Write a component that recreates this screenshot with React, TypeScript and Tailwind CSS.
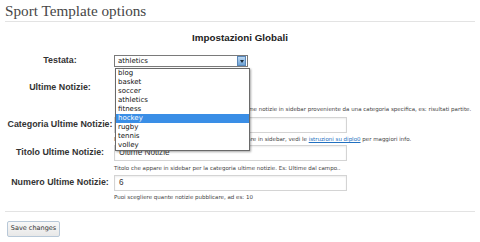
import React from "react";

const items = ["blog", "basket", "soccer", "athletics", "fitness", "hockey", "rugby", "tennis", "volley"];

function Label({ children, h }: { children: React.ReactNode; h: string }) {
  return (
    <div className={`w-[110px] shrink-0 ${h} flex items-center justify-center font-['Liberation_Sans',sans-serif] font-bold text-[8.9px] text-[#333] whitespace-nowrap`}>
      {children}
    </div>
  );
}

function TextInput({ value }: { value: string }) {
  return (
    <div className="w-[233px] h-[16px] border border-[#d4d4d4] shadow-[inset_0_1px_2px_rgba(0,0,0,0.07)] flex items-center pl-[4px] font-['Liberation_Sans',sans-serif] text-[8.2px] text-[#333]">
      {value}
    </div>
  );
}

function Desc({ children }: { children: React.ReactNode }) {
  return <div className="h-[8px] leading-[8px] text-[5.5px] text-[#444] whitespace-nowrap">{children}</div>;
}

export default function App() {
  return (
    <div className="w-[480px] h-[242px] bg-white relative overflow-hidden font-['DejaVu_Sans',sans-serif]">
      <div className="px-[5px]">
        <h2 className="h-[22px] pt-[2px] font-['Liberation_Serif',serif] text-[15.2px] leading-[18px] text-[#464646] border-b border-[#e3e3e3]">
          Sport Template options
        </h2>
        <h3 className="mt-[10px] h-[12px] leading-[12px] text-center font-['Liberation_Sans',sans-serif] font-bold text-[9.8px] text-[#222]">Impostazioni Globali</h3>

        <div className="mt-[11px] flex">
          <Label h="h-[12px]">Testata:</Label>
          <div className="ml-[-1px] w-[134px] h-[12px] border border-[#7a7a7a] flex items-center justify-between pl-[3px] text-[7px] text-[#111]">
            <span>athletics</span>
            <div className="w-[9px] h-[10px] mr-[1px] bg-gradient-to-b from-[#bcd8f2] to-[#6da3d6] border border-[#5a87b8] flex items-center justify-center">
              <div className="w-0 h-0 border-l-[2.5px] border-r-[2.5px] border-t-[3px] border-l-transparent border-r-transparent border-t-[#1a2a3a]" />
            </div>
          </div>
        </div>

        <div className="mt-[15px] flex">
          <Label h="h-[12px]">Ultime Notizie:</Label>
          <div className="flex flex-col min-w-0">
            <div className="w-[10px] h-[10px] border border-[#999]" />
            <div className="mt-[13px]">
              <Desc>Spunta questa casella se vuoi visualizzare le  ultime notizie in sidebar proveniente da una categoria specifica, es: risultati partite.</Desc>
            </div>
          </div>
        </div>

        <div className="mt-[4px] flex">
          <Label h="h-[16px]">Categoria Ultime Notizie:</Label>
          <div className="ml-[-1px] flex flex-col min-w-0">
            <TextInput value="" />
            <div className="mt-[2px]">
              <Desc>
                Inserisci qui l'ID della categoria che vorrai mostrare in sidebar, vedi le <span className="text-[#2170c0] underline">istruzioni su diplo0</span> per maggiori info.
              </Desc>
            </div>
          </div>
        </div>

        <div className="mt-[2px] flex">
          <Label h="h-[16px]">Titolo Ultime Notizie:</Label>
          <div className="ml-[-1px] flex flex-col min-w-0">
            <TextInput value="Ultime Notizie" />
            <div className="mt-[3px]">
              <Desc>Titolo che appare in sidebar per la categoria ultime notizie. Es: Ultime dal campo..</Desc>
            </div>
          </div>
        </div>

        <div className="mt-[3px] flex">
          <Label h="h-[16px]">Numero Ultime Notizie:</Label>
          <div className="ml-[-1px] flex flex-col min-w-0">
            <TextInput value="6" />
            <div className="mt-[2px]">
              <Desc>Puoi scegliere quante notizie pubblicare, ad es: 10</Desc>
            </div>
          </div>
        </div>

        <div className="mt-[10px] border-t border-[#e3e3e3]" />

        <div className="mt-[9px] ml-[2px] w-[53px] h-[16px] border border-[#b8c8d8] bg-gradient-to-b from-[#f8f8f8] to-[#e8e8e8] rounded-[2px] flex items-center justify-center text-[6.5px] text-[#333] whitespace-nowrap">
          Save changes
        </div>
      </div>

      <div className="absolute left-[115px] top-[68px] w-[135px] h-[83px] bg-white border border-[#6a6a6a] shadow-[1px_1px_2px_rgba(0,0,0,0.35)] flex flex-col text-[7px] text-[#111]">
        {items.map((it) => (
          <div
            key={it}
            className={`h-[9px] leading-[9px] pl-[2px] ${it === "hockey" ? "bg-[#3a8ee6] text-white" : ""}`}
          >
            {it}
          </div>
        ))}
      </div>
    </div>
  );
}
